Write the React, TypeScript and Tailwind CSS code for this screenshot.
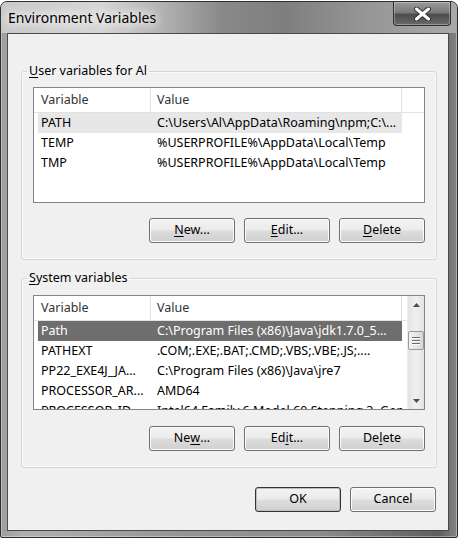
import type { ReactNode } from 'react'

type Row = { name: string; value: string }

const userVars: Row[] = [
  { name: 'PATH', value: 'C:\\Users\\Al\\AppData\\Roaming\\npm;C:\\...' },
  { name: 'TEMP', value: '%USERPROFILE%\\AppData\\Local\\Temp' },
  { name: 'TMP', value: '%USERPROFILE%\\AppData\\Local\\Temp' },
]

const systemVars: Row[] = [
  { name: 'Path', value: 'C:\\Program Files (x86)\\Java\\jdk1.7.0_5...' },
  { name: 'PATHEXT', value: '.COM;.EXE;.BAT;.CMD;.VBS;.VBE;.JS;....' },
  { name: 'PP22_EXE4J_JA...', value: 'C:\\Program Files (x86)\\Java\\jre7' },
  { name: 'PROCESSOR_AR...', value: 'AMD64' },
  { name: 'PROCESSOR_ID...', value: 'Intel64 Family 6 Model 60 Stepping 3, GenuineIntel' },
]

function Button({ children, isDefault = false }: { children: ReactNode; isDefault?: boolean }) {
  return (
    <button
      className={`w-[86px] h-[25px] rounded-[3px] border text-black flex items-center justify-center bg-[linear-gradient(180deg,#f3f3f3_0%,#ebebeb_48%,#dddddd_52%,#cfcfcf_100%)] ${
        isDefault ? 'border-[#333333] shadow-[inset_0_0_0_1px_#bdbdbd]' : 'border-[#707070] shadow-[inset_0_0_0_1px_#fcfcfc]'
      }`}
    >
      {children}
    </button>
  )
}

function Key({ children }: { children: ReactNode }) {
  return <span className="underline underline-offset-[2px] decoration-1">{children}</span>
}

function Arrow({ up }: { up: boolean }) {
  return (
    <div className="h-[17px] flex items-center justify-center">
      <svg width="7" height="4" viewBox="0 0 7 4">
        {up ? <path d="M0 4 L3.5 0 L7 4 Z" fill="#4d4d4d" /> : <path d="M0 0 L3.5 4 L7 0 Z" fill="#4d4d4d" />}
      </svg>
    </div>
  )
}

function ScrollBar() {
  return (
    <div className="w-[17px] flex flex-col bg-[linear-gradient(90deg,#e3e3e3,#f0f0f0_50%,#e3e3e3)] border-l border-[#ededed]">
      <Arrow up />
      <div className="h-[18px]" />
      <div className="h-[19px] rounded-[2px] border border-[#979797] bg-[linear-gradient(90deg,#f2f2f2,#e6e6e6_50%,#d6d6d6)] flex flex-col items-center justify-center gap-[2px]">
        <div className="w-[8px] h-[1px] bg-[#6e6e6e] shadow-[0_1px_0_#fff]" />
        <div className="w-[8px] h-[1px] bg-[#6e6e6e] shadow-[0_1px_0_#fff]" />
        <div className="w-[8px] h-[1px] bg-[#6e6e6e] shadow-[0_1px_0_#fff]" />
      </div>
      <div className="flex-1" />
      <Arrow up={false} />
    </div>
  )
}

function VarList({
  rows,
  highlight,
  scroll = false,
  className = '',
}: {
  rows: Row[]
  highlight: 'hover' | 'selected'
  scroll?: boolean
  className?: string
}) {
  return (
    <div className={`flex border border-[#858585] bg-white overflow-hidden ${className}`}>
      <div className="flex-1 flex flex-col min-w-0">
        <div className="h-[25px] shrink-0 flex border-b border-[#e2e2e2] text-[#333333]">
          <div className="w-[117px] pl-[7px] flex items-center border-r border-[#e2e2e2]">Variable</div>
          <div className="w-[251px] pl-[6px] flex items-center border-r border-[#e2e2e2]">Value</div>
        </div>
        {rows.map((row, i) => {
          let rowClass = 'text-black'
          if (i === 0) rowClass = highlight === 'selected' ? 'bg-[#6e6e6e] text-white' : 'bg-[#e7e7e7] text-black'
          return (
            <div key={row.name} className={`h-[20px] shrink-0 ml-[4px] w-[364px] flex items-center ${rowClass}`}>
              <div className="w-[113px] pl-[3px] whitespace-nowrap overflow-hidden">{row.name}</div>
              <div className="w-[251px] pl-[6px] whitespace-nowrap overflow-hidden">{row.value}</div>
            </div>
          )
        })}
      </div>
      {scroll && <ScrollBar />}
    </div>
  )
}

export default function App() {
  return (
    <div className="w-[459px] h-[539px] bg-white pt-[1px] font-['Noto_Sans',sans-serif] text-[12.5px]">
      <div className="w-[458px] h-[537px] rounded-t-[7px] rounded-b-[2px] border border-[#2e2e2e] shadow-[inset_0_0_0_1px_rgba(255,255,255,0.35)] bg-[linear-gradient(90deg,#9e9e9e_0%,#b0b0b0_5%,#959595_40%,#8c8c8c_70%,#5e5e5e_96%,#858585_100%)] flex flex-col pl-[6px]">
        {/* Title bar */}
        <div className="h-[31px] -ml-[6px] pl-[7px] flex items-start justify-between rounded-t-[6px] bg-[linear-gradient(90deg,#c9c9c9_0%,#d6d6d6_22%,#b0b0b0_36%,#8a8a8a_48%,#7e7e7e_62%,#969696_80%,#a8a8a8_100%)]">
          <span className="pt-[6px] text-[14px] leading-[20px] text-black [text-shadow:0_0_8px_#fff,0_0_12px_#fff,0_0_14px_#fff]">
            Environment Variables
          </span>
          <div className="w-[58px] h-[24px] mr-[6px] rounded-b-[4px] border border-t-0 border-[#2f2f2f] bg-[linear-gradient(180deg,#9a9a9a_0%,#7a7a7a_45%,#4c4c4c_55%,#6a6a6a_100%)] shadow-[inset_0_0_0_1px_rgba(255,255,255,0.3)] flex items-center justify-center">
            <svg width="17" height="14" viewBox="0 0 17 14">
              <path d="M2.5 2 L14.5 12 M14.5 2 L2.5 12" stroke="#333333" strokeWidth="5" strokeLinecap="round" />
              <path d="M2.5 2 L14.5 12 M14.5 2 L2.5 12" stroke="#ffffff" strokeWidth="3" strokeLinecap="round" />
            </svg>
          </div>
        </div>

        {/* Client area */}
        <div className="w-[442px] h-[498px] border border-[#4a4a4a] bg-[#f0f0f0] pt-[29px] pl-[13px] flex flex-col">
          <fieldset className="w-[416px] border border-[#d6d6d6] rounded-[3px] px-[11px] pb-[16px] shadow-[inset_0_0_0_1px_#fafafa]">
            <legend className="-ml-[6px] px-[2px] leading-[16px] text-black">
              <Key>U</Key>ser variables for Al
            </legend>
            <VarList rows={userVars} highlight="hover" className="mt-[8px] h-[116px]" />
            <div className="mt-[15px] flex justify-end gap-[9px]">
              <Button>
                <Key>N</Key>ew...
              </Button>
              <Button>
                <Key>E</Key>dit...
              </Button>
              <Button>
                <Key>D</Key>elete
              </Button>
            </div>
          </fieldset>

          <fieldset className="mt-[10px] w-[416px] border border-[#d6d6d6] rounded-[3px] px-[11px] pb-[16px] shadow-[inset_0_0_0_1px_#fafafa]">
            <legend className="-ml-[6px] px-[2px] leading-[16px] text-black">
              <Key>S</Key>ystem variables
            </legend>
            <VarList rows={systemVars} highlight="selected" scroll className="mt-[9px] h-[115px]" />
            <div className="mt-[16px] flex justify-end gap-[9px]">
              <Button>
                Ne<Key>w</Key>...
              </Button>
              <Button>
                Ed<Key>i</Key>t...
              </Button>
              <Button>
                De<Key>l</Key>ete
              </Button>
            </div>
          </fieldset>

          <div className="mt-[19px] pr-[12px] flex justify-end gap-[9px]">
            <Button isDefault>OK</Button>
            <Button>Cancel</Button>
          </div>
        </div>
      </div>
    </div>
  )
}
